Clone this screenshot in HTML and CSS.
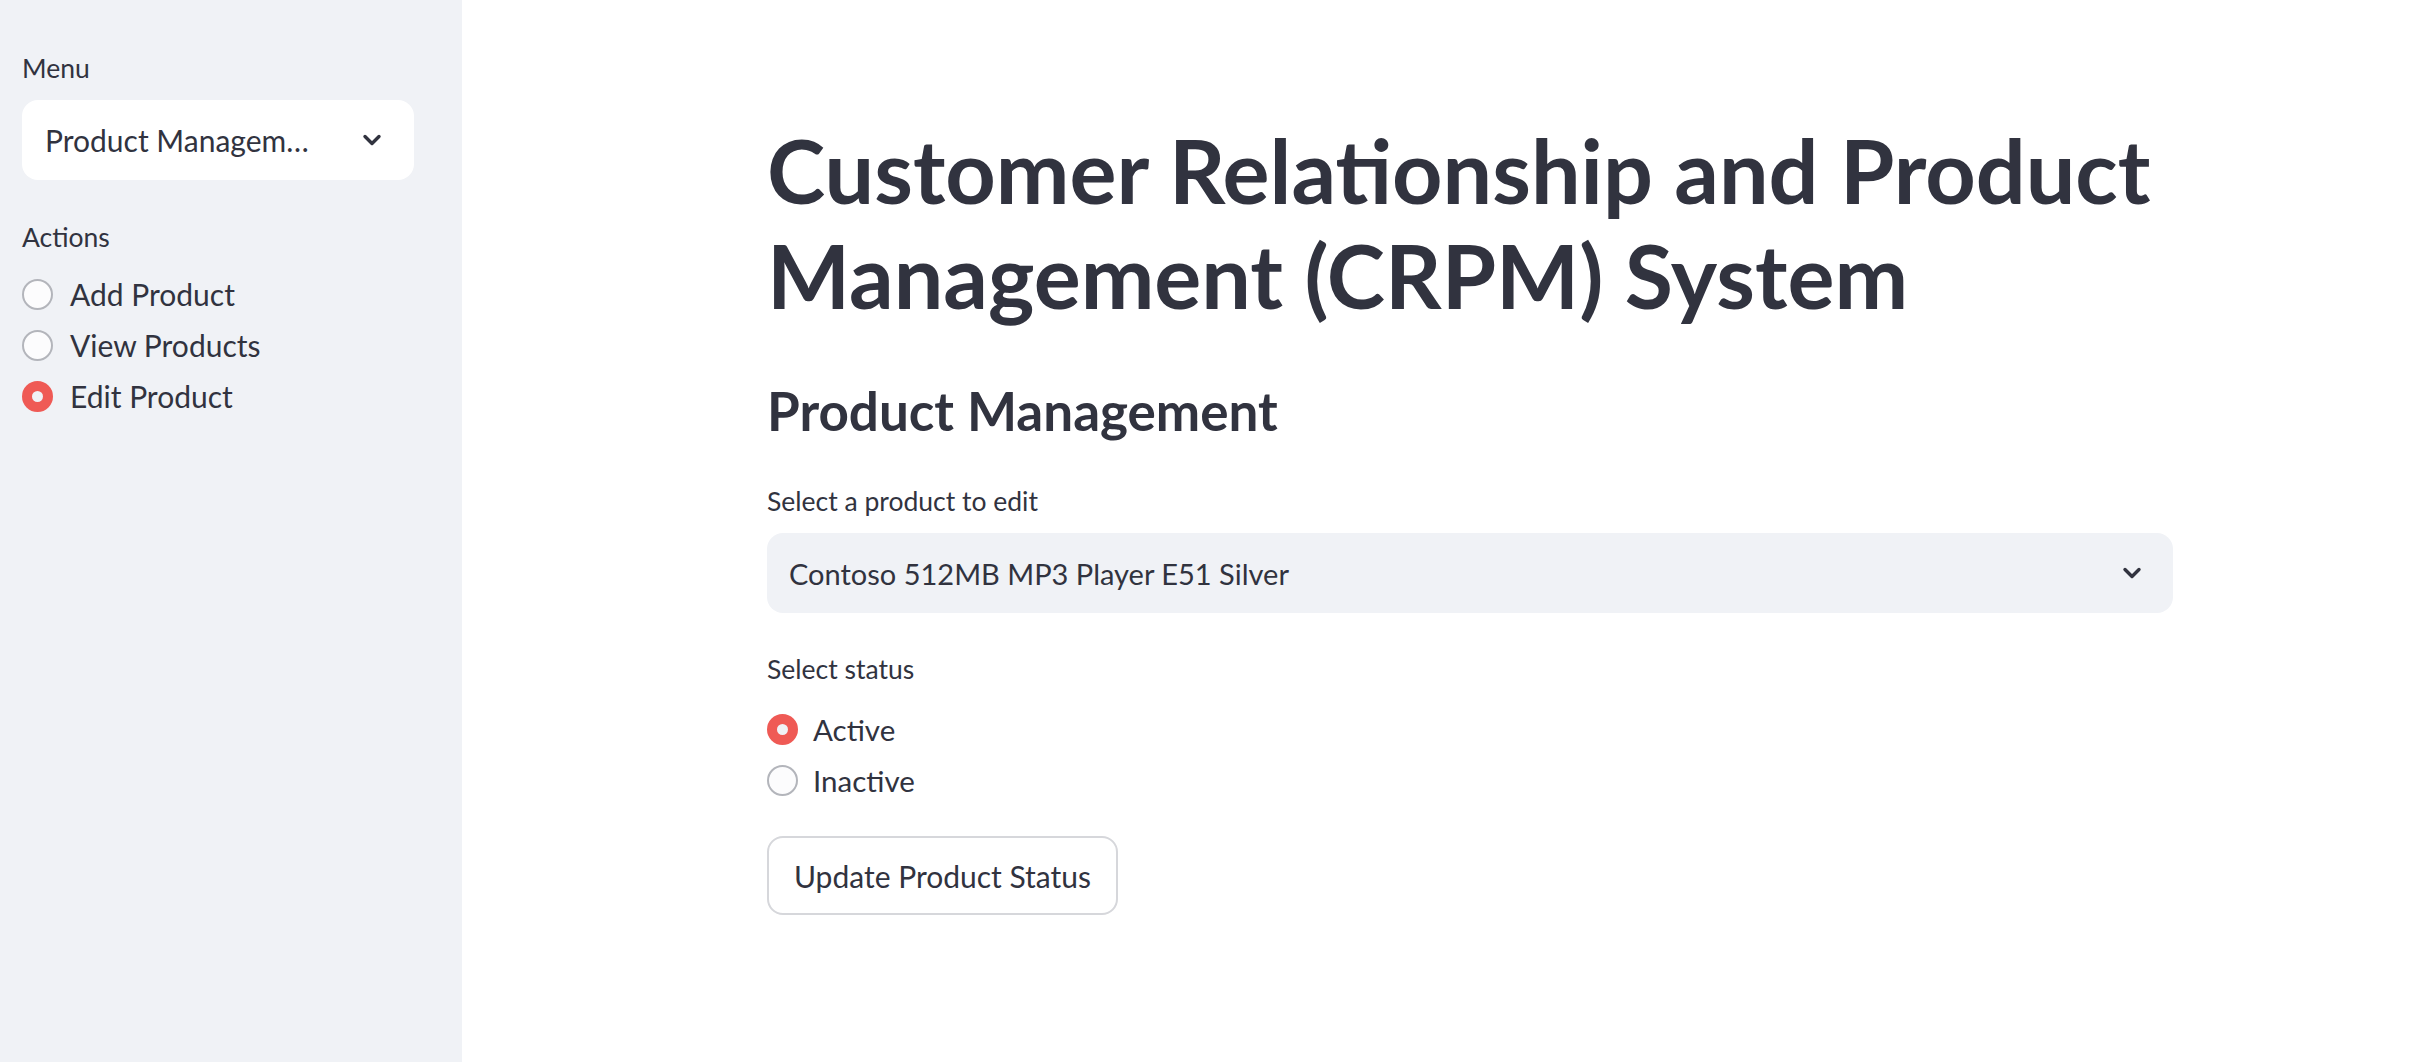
FILE: index.html
```html
<!DOCTYPE html>
<html lang="en">
<head>
<meta charset="utf-8">
<title>CRPM System</title>
<link rel="stylesheet" href="styles.css">
</head>
<body>
<div class="app">
  <aside class="sidebar">
    <div class="label menu-label">Menu</div>
    <div class="select select-white">
      <span class="select-text">Product Managem<span class="ell">…</span></span>
      <svg class="chev" viewBox="0 0 20 12" width="20" height="12"><polyline points="3,2.5 10,9.5 17,2.5" fill="none" stroke="#31333f" stroke-width="3.4" stroke-linecap="round" stroke-linejoin="round"/></svg>
    </div>
    <div class="label actions-label">Actions</div>
    <div class="radios side-radios">
      <div class="radio-row"><span class="radio"></span><span class="radio-text">Add Product</span></div>
      <div class="radio-row"><span class="radio"></span><span class="radio-text">View Products</span></div>
      <div class="radio-row"><span class="radio on"></span><span class="radio-text">Edit Product</span></div>
    </div>
  </aside>
  <main class="main">
    <div class="content">
      <h1 class="title">Customer Relationship and Product Management (CRPM) System</h1>
      <h3 class="subtitle">Product Management</h3>
      <div class="label field-label">Select a product to edit</div>
      <div class="select select-grey">
        <span class="select-text">Contoso 512MB MP3 Player E51 Silver</span>
        <svg class="chev" viewBox="0 0 20 12" width="20" height="12"><polyline points="3,2.5 10,9.5 17,2.5" fill="none" stroke="#31333f" stroke-width="3.4" stroke-linecap="round" stroke-linejoin="round"/></svg>
      </div>
      <div class="label status-label">Select status</div>
      <div class="radios main-radios">
        <div class="radio-row"><span class="radio on"></span><span class="radio-text">Active</span></div>
        <div class="radio-row"><span class="radio"></span><span class="radio-text">Inactive</span></div>
      </div>
      <button class="btn">Update Product Status</button>
    </div>
  </main>
</div>
</body>
</html>
```

FILE: styles.css
```css
* { box-sizing: border-box; }
html, body {
  margin: 0;
  padding: 0;
  background: #ffffff;
  color: #31333f;
  font-family: Lato, "Noto Sans", sans-serif;
}
.app {
  display: flex;
  height: 1062px;
  overflow: hidden;
}
.sidebar {
  width: 462px;
  flex: none;
  background: #f0f2f6;
  padding: 50px 48px 0 22px;
}
.label {
  font-size: 26.5px;
  line-height: 36px;
  color: #31333f;
}
.menu-label { margin: 0; }
.select {
  height: 80px;
  border-radius: 16px;
  display: flex;
  align-items: center;
  justify-content: space-between;
  font-size: 29px;
  color: #31333f;
}
.select-white {
  margin-top: 14px;
  background: #ffffff;
  padding: 0 32px 0 23px;
  font-size: 30px;
}
.select-grey {
  margin-top: 14px;
  background: #f0f2f6;
  padding: 0 31px 0 22px;
}
.select-text { white-space: nowrap; }
.ell { letter-spacing: 3px; }
.chev { flex: none; }
.actions-label { margin-top: 39px; }
.radios {
  display: flex;
  flex-direction: column;
}
.side-radios { margin-top: 14px; }
.radio-row {
  height: 51px;
  display: flex;
  align-items: center;
  gap: 17px;
  font-size: 30px;
  line-height: 51px;
}
.radio {
  width: 31px;
  height: 31px;
  border-radius: 50%;
  border: 2px solid #b3b5bb;
  background: #fcfcfd;
  flex: none;
  position: relative;
}
.radio.on {
  background: #ef5a55;
  border-color: #ef5a55;
}
.radio.on::after {
  content: "";
  position: absolute;
  left: 50%;
  top: 50%;
  width: 11px;
  height: 11px;
  margin: -5.5px 0 0 -5.5px;
  border-radius: 50%;
  background: #f0f2f6;
}
.main {
  flex: 1;
  padding-left: 305px;
}
.content {
  width: 1406px;
  padding-top: 118px;
}
.title {
  margin: 0;
  font-size: 88px;
  line-height: 105px;
  font-weight: 700;
}
.subtitle {
  margin: 49px 0 0;
  font-size: 53px;
  line-height: 68px;
  font-weight: 700;
}
.field-label { margin-top: 38px; }
.status-label { margin-top: 38px; }
.main-radios { margin-top: 17px; }
.main-radios .radio-row { gap: 15px; font-size: 29.5px; }
.btn {
  display: block;
  margin-top: 30px;
  height: 79px;
  width: 351px;
  padding: 0 0 0 25px;
  text-align: left;
  background: #ffffff;
  border: 2px solid #d6d7db;
  border-radius: 16px;
  font-family: inherit;
  font-size: 30px;
  color: #31333f;
}
```
